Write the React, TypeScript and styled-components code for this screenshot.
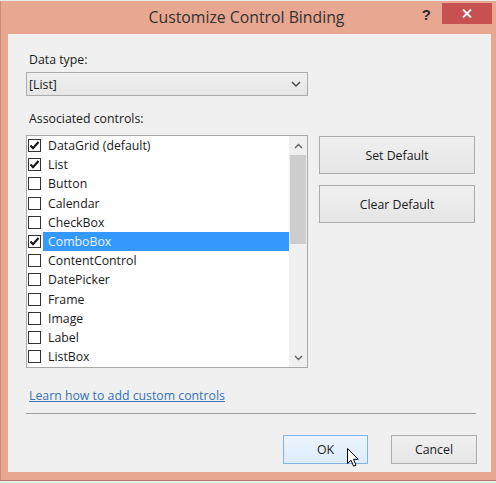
import React from "react";
import styled, { createGlobalStyle } from "styled-components";

const Global = createGlobalStyle`
  html, body { margin: 0; padding: 0; background: #ececec; }
  body {
    font-family: "Open Sans", "Noto Sans", sans-serif;
    width: 496px; height: 483px; overflow: hidden;
    color: #1a1a1a;
  }
`;

const Page = styled.div`
  padding-top: 1px;
`;

const Window = styled.div`
  width: 496px;
  height: 480px;
  box-sizing: border-box;
  background: #e8a791;
  border-left: 1px solid #c98c78;
  border-bottom: 1px solid #b07a68;
  display: flex;
  flex-direction: column;
`;

const TitleBar = styled.div`
  height: 33px;
  flex: none;
  display: grid;
  grid-template-columns: 1fr auto 1fr;
  padding-right: 4px;
`;

const Title = styled.div`
  grid-column: 2;
  margin-top: 5px;
  font-size: 15.8px;
  line-height: 22px;
  color: #333;
`;

const Controls = styled.div`
  grid-column: 3;
  display: flex;
  justify-content: flex-end;
  align-items: flex-start;
  gap: 11px;
`;

const Help = styled.div`
  margin-top: 5px;
  font-size: 15px;
  font-weight: 700;
  line-height: 17px;
  color: #2a2a2a;
  font-family: "Liberation Sans", sans-serif;
`;

const CloseBtn = styled.div`
  margin-top: 2px;
  width: 50px;
  height: 21px;
  background: #c75050;
  display: flex;
  align-items: center;
  justify-content: center;
`;

const Client = styled.div`
  margin-left: 7px;
  width: 483px;
  height: 438px;
  flex: none;
  box-sizing: border-box;
  background: #f0f0f0;
  display: flex;
  flex-direction: column;
  padding: 18px 16px 0 18px;
`;

const FieldLabel = styled.div<{ $gap?: number }>`
  font-size: 12.3px;
  line-height: 16px;
  margin-left: 3px;
  margin-top: ${(p) => p.$gap ?? 0}px;
`;

const Combo = styled.div`
  margin-top: 4px;
  width: 282px;
  height: 24px;
  box-sizing: border-box;
  border: 1px solid #acacac;
  background: linear-gradient(#efefef, #e6e6e6);
  display: flex;
  align-items: center;
  justify-content: space-between;
  padding: 0 6px 0 2px;
  font-size: 12.3px;
`;

const BodyRow = styled.div`
  margin-top: 8px;
  display: flex;
  gap: 11px;
  align-items: flex-start;
`;

const ListBox = styled.div`
  width: 282px;
  height: 233px;
  box-sizing: border-box;
  border: 1px solid #a9a9a9;
  background: #fff;
  display: flex;
`;

const Items = styled.div`
  flex: 1;
  display: flex;
  flex-direction: column;
`;

const Row = styled.div`
  height: 19.2px;
  display: flex;
  align-items: center;
  flex: none;
`;

const Box = styled.div`
  width: 13px;
  height: 13px;
  box-sizing: border-box;
  border: 1px solid #333;
  background: #fff;
  margin-left: 1px;
  flex: none;
  display: flex;
`;

const ItemLabel = styled.div<{ $selected?: boolean }>`
  margin-left: 2px;
  flex: 1;
  align-self: stretch;
  display: flex;
  align-items: center;
  padding-left: 5px;
  font-size: 12.3px;
  background: ${(p) => (p.$selected ? "#3399ff" : "transparent")};
  color: ${(p) => (p.$selected ? "#eef6ff" : "#1a1a1a")};
`;

const Scrollbar = styled.div`
  width: 18px;
  flex: none;
  background: #f0f0f0;
  display: flex;
  flex-direction: column;
`;

const ArrowBox = styled.div`
  height: 19px;
  flex: none;
  display: flex;
  align-items: center;
  justify-content: center;
`;

const Thumb = styled.div`
  height: 89px;
  margin: 0 1px;
  background: #cdcdcd;
  flex: none;
`;

const Track = styled.div`
  flex: 1;
`;

const SideButtons = styled.div`
  margin-top: 1px;
  width: 156px;
  display: flex;
  flex-direction: column;
  gap: 11px;
`;

const Button = styled.div<{ $w?: number; $h?: number; $hover?: boolean }>`
  position: relative;
  width: ${(p) => p.$w ?? 156}px;
  height: ${(p) => p.$h ?? 38}px;
  box-sizing: border-box;
  border: 1px solid ${(p) => (p.$hover ? "#7eb4ea" : "#acacac")};
  background: ${(p) =>
    p.$hover ? "linear-gradient(#ecf4fc, #dcecfc)" : "linear-gradient(#f0f0f0, #e5e5e5)"};
  display: flex;
  align-items: center;
  justify-content: center;
  font-size: 12.3px;
  color: #1a1a1a;
`;

const Link = styled.div`
  margin-top: 20px;
  margin-left: 3px;
  font-size: 12.3px;
  line-height: 16px;
  color: #3573bb;
  text-decoration: underline;
`;

const Separator = styled.div`
  margin-top: 9px;
  margin-right: -1px;
  height: 1px;
  background: #9c9c9c;
`;

const Footer = styled.div`
  margin-top: 21px;
  margin-right: -2px;
  display: flex;
  justify-content: flex-end;
  gap: 23px;
`;

const Cursor = styled.svg`
  position: absolute;
  left: 63px;
  top: 12px;
`;

const Chevron = ({ up }: { up?: boolean }) => (
  <svg width="9" height="6" viewBox="0 0 9 6">
    <polyline
      points={up ? "1,5 4.5,1.5 8,5" : "1,1 4.5,4.5 8,1"}
      fill="none"
      stroke="#606060"
      strokeWidth="1.4"
    />
  </svg>
);

const Check = () => (
  <svg width="11" height="11" viewBox="0 0 11 11">
    <polyline points="1.5,5.5 4,8.2 9.5,2" fill="none" stroke="#111" strokeWidth="2" />
  </svg>
);

const items: { name: string; checked?: boolean; selected?: boolean }[] = [
  { name: "DataGrid (default)", checked: true },
  { name: "List", checked: true },
  { name: "Button" },
  { name: "Calendar" },
  { name: "CheckBox" },
  { name: "ComboBox", checked: true, selected: true },
  { name: "ContentControl" },
  { name: "DatePicker" },
  { name: "Frame" },
  { name: "Image" },
  { name: "Label" },
  { name: "ListBox" },
];

export default function App() {
  return (
    <>
      <Global />
      <Page>
        <Window>
          <TitleBar>
            <Title>Customize Control Binding</Title>
            <Controls>
              <Help>?</Help>
              <CloseBtn>
                <svg width="10" height="9" viewBox="0 0 10 9">
                  <path d="M1 0.5 L9 8.5 M9 0.5 L1 8.5" stroke="#fff" strokeWidth="1.8" />
                </svg>
              </CloseBtn>
            </Controls>
          </TitleBar>
          <Client>
            <FieldLabel>Data type:</FieldLabel>
            <Combo>
              <span>[List]</span>
              <svg width="10" height="6" viewBox="0 0 10 6">
                <polyline points="1,1 5,5 9,1" fill="none" stroke="#444" strokeWidth="1.4" />
              </svg>
            </Combo>
            <FieldLabel $gap={15}>Associated controls:</FieldLabel>
            <BodyRow>
              <ListBox>
                <Items>
                  {items.map((it) => (
                    <Row key={it.name}>
                      <Box>{it.checked && <Check />}</Box>
                      <ItemLabel $selected={it.selected}>{it.name}</ItemLabel>
                    </Row>
                  ))}
                </Items>
                <Scrollbar>
                  <ArrowBox>
                    <Chevron up />
                  </ArrowBox>
                  <Thumb />
                  <Track />
                  <ArrowBox>
                    <Chevron />
                  </ArrowBox>
                </Scrollbar>
              </ListBox>
              <SideButtons>
                <Button>Set Default</Button>
                <Button>Clear Default</Button>
              </SideButtons>
            </BodyRow>
            <Link>Learn how to add custom controls</Link>
            <Separator />
            <Footer>
              <Button $w={85} $h={29} $hover>
                OK
                <Cursor width="13" height="20" viewBox="0 0 13 20">
                  <path
                    d="M0.5 0.5 L0.5 15.5 L4 12.2 L6.6 18.2 L9 17.2 L6.5 11.3 L11.2 11.3 Z"
                    fill="#fff"
                    stroke="#000"
                    strokeWidth="1"
                    strokeLinejoin="round"
                  />
                </Cursor>
              </Button>
              <Button $w={86} $h={29}>Cancel</Button>
            </Footer>
          </Client>
        </Window>
      </Page>
    </>
  );
}
